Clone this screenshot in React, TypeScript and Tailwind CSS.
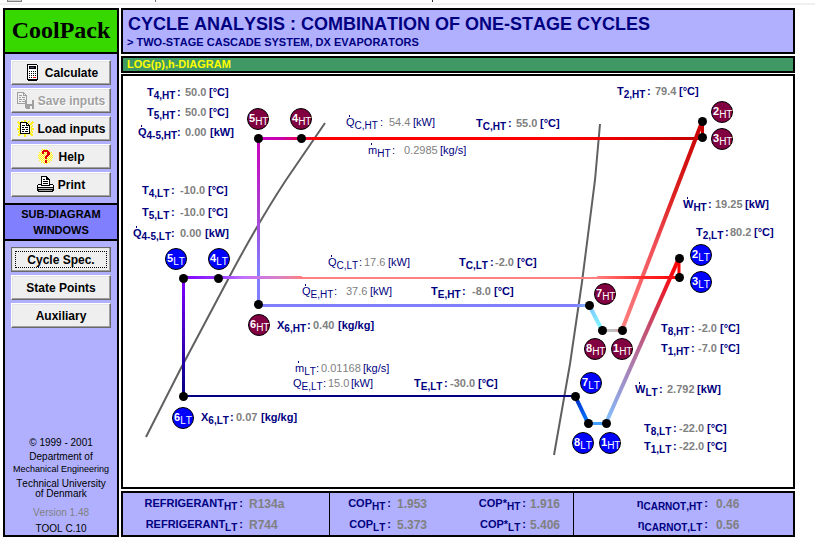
import type { ReactNode } from "react";

type Reading = {
  x: number;
  y: number;
  base: string;
  sub: string;
  colon: number;
  valueX: number;
  value: string;
  unitX: number;
  unit: string;
  dot?: boolean;
  light?: boolean;
};

type Marker = { x: number; y: number; n: string; stage: "HT" | "LT"; low?: boolean };

const readings: Reading[] = [
  { x: 24, y: 20, base: "T", sub: "4,HT", colon: 54, valueX: 62, value: "50.0", unitX: 86, unit: "[°C]" },
  { x: 24, y: 40, base: "T", sub: "5,HT", colon: 54, valueX: 62, value: "50.0", unitX: 86, unit: "[°C]" },
  { x: 15, y: 60, base: "Q", sub: "4-5,HT", colon: 54, valueX: 62, value: "0.00", unitX: 87, unit: "[kW]", dot: true },
  { x: 494, y: 19, base: "T", sub: "2,HT", colon: 524, valueX: 532, value: "79.4", unitX: 556, unit: "[°C]" },
  { x: 223, y: 50, base: "Q", sub: "C,HT", colon: 257, valueX: 266, value: "54.4", unitX: 290, unit: "[kW]", dot: true, light: true },
  { x: 353, y: 51, base: "T", sub: "C,HT", colon: 385, valueX: 393, value: "55.0", unitX: 417, unit: "[°C]" },
  { x: 245, y: 78, base: "m", sub: "HT", colon: 269, valueX: 281, value: "0.2985", unitX: 317, unit: "[kg/s]", dot: true, light: true },
  { x: 19, y: 118, base: "T", sub: "4,LT", colon: 48, valueX: 57, value: "-10.0", unitX: 85, unit: "[°C]" },
  { x: 19, y: 140, base: "T", sub: "5,LT", colon: 48, valueX: 57, value: "-10.0", unitX: 85, unit: "[°C]" },
  { x: 10, y: 161, base: "Q", sub: "4-5,LT", colon: 48, valueX: 57, value: "0.00", unitX: 82, unit: "[kW]", dot: true },
  { x: 560, y: 132, base: "W", sub: "HT", colon: 585, valueX: 592, value: "19.25", unitX: 622, unit: "[kW]", dot: true },
  { x: 573, y: 160, base: "T", sub: "2,LT", colon: 602, valueX: 607, value: "80.2", unitX: 631, unit: "[°C]" },
  { x: 205, y: 190, base: "Q", sub: "C,LT", colon: 236, valueX: 241, value: "17.6", unitX: 265, unit: "[kW]", dot: true, light: true },
  { x: 336, y: 190, base: "T", sub: "C,LT", colon: 367, valueX: 372, value: "-2.0", unitX: 394, unit: "[°C]" },
  { x: 179, y: 219, base: "Q", sub: "E,HT", colon: 211, valueX: 223, value: "37.6", unitX: 247, unit: "[kW]", dot: true, light: true },
  { x: 308, y: 219, base: "T", sub: "E,HT", colon: 339, valueX: 349, value: "-8.0", unitX: 371, unit: "[°C]" },
  { x: 154, y: 253, base: "X", sub: "6,HT", colon: 184, valueX: 190, value: "0.40", unitX: 215, unit: "[kg/kg]" },
  { x: 538, y: 256, base: "T", sub: "8,HT", colon: 568, valueX: 575, value: "-2.0", unitX: 597, unit: "[°C]" },
  { x: 538, y: 276, base: "T", sub: "1,HT", colon: 568, valueX: 575, value: "-7.0", unitX: 597, unit: "[°C]" },
  { x: 172, y: 296, base: "m", sub: "LT", colon: 193, valueX: 198, value: "0.01168", unitX: 240, unit: "[kg/s]", dot: true, light: true },
  { x: 170, y: 311, base: "Q", sub: "E,LT", colon: 200, valueX: 205, value: "15.0", unitX: 228, unit: "[kW]", light: true },
  { x: 291, y: 311, base: "T", sub: "E,LT", colon: 321, valueX: 327, value: "-30.0", unitX: 355, unit: "[°C]" },
  { x: 78, y: 345, base: "X", sub: "6,LT", colon: 107, valueX: 113, value: "0.07", unitX: 138, unit: "[kg/kg]" },
  { x: 512, y: 317, base: "W", sub: "LT", colon: 536, valueX: 544, value: "2.792", unitX: 574, unit: "[kW]", dot: true },
  { x: 521, y: 356, base: "T", sub: "8,LT", colon: 550, valueX: 556, value: "-22.0", unitX: 584, unit: "[°C]" },
  { x: 521, y: 374, base: "T", sub: "1,LT", colon: 550, valueX: 556, value: "-22.0", unitX: 584, unit: "[°C]" },
];

const markers: Marker[] = [
  { x: 135, y: 43, n: "5", stage: "HT" },
  { x: 178, y: 43, n: "4", stage: "HT" },
  { x: 599, y: 36, n: "2", stage: "HT" },
  { x: 599, y: 63, n: "3", stage: "HT" },
  { x: 136, y: 249, n: "6", stage: "HT" },
  { x: 482, y: 218, n: "7", stage: "HT" },
  { x: 472, y: 273, n: "8", stage: "HT" },
  { x: 499, y: 273, n: "1", stage: "HT" },
  { x: 53, y: 183, n: "5", stage: "LT", low: true },
  { x: 96, y: 183, n: "4", stage: "LT", low: true },
  { x: 578, y: 179, n: "2", stage: "LT", low: true },
  { x: 578, y: 206, n: "3", stage: "LT", low: true },
  { x: 60, y: 342, n: "6", stage: "LT", low: true },
  { x: 468, y: 307, n: "7", stage: "LT", low: true },
  { x: 460, y: 367, n: "8", stage: "LT", low: true },
  { x: 487, y: 367, n: "1", stage: "HT", low: true },
];

const nodes = [
  [135, 62], [178, 62], [579, 45], [579, 61], [135, 228], [466, 229], [479, 254], [499, 254],
  [60, 202], [95, 202], [556, 182], [556, 201], [60, 320], [452, 320], [465, 347], [483, 347],
];

function ReadingText({ r }: { r: Reading }) {
  const weight = r.light ? "font-normal" : "font-bold";
  const dotX = r.x + (r.base === "W" ? 4 : 3);
  return (
    <g className={`text-[11px] ${weight}`} fill="#000080">
      {r.dot && <rect x={dotX} y={r.y - 11} width="1" height="2" />}
      <text x={r.x} y={r.y}>
        {r.base}
        <tspan className="text-[10px]" dy="3">{r.sub}</tspan>
      </text>
      <text x={r.colon} y={r.y}>:</text>
      <text x={r.valueX} y={r.y} fill="#808080">{r.value}</text>
      <text x={r.unitX} y={r.y}>{r.unit}</text>
    </g>
  );
}

function Gradient({ id, from, to, stops }: { id: string; from: number[]; to: number[]; stops: [number, string][] }) {
  return (
    <linearGradient id={id} gradientUnits="userSpaceOnUse" x1={from[0]} y1={from[1]} x2={to[0]} y2={to[1]}>
      {stops.map(([offset, color]) => (
        <stop key={offset} offset={offset} stopColor={color} />
      ))}
    </linearGradient>
  );
}

function Diagram() {
  return (
    <svg viewBox="0 0 670 411" className="block h-auto w-full" role="img" aria-label="LOG(p),h-DIAGRAM">
      <defs>
        <Gradient id="htTop" from={[135, 0]} to={[579, 0]} stops={[[0, "#c800c8"], [0.05, "#c800b0"], [0.13, "#ff0000"], [0.7, "#ff0000"], [1, "#c00000"]]} />
        <Gradient id="htLeft" from={[0, 62]} to={[0, 228]} stops={[[0, "#c800b8"], [0.5, "#a848d8"], [0.8, "#8080ff"], [1, "#8080ff"]]} />
        <Gradient id="htBottom" from={[135, 0]} to={[466, 0]} stops={[[0, "#8080ff"], [0.96, "#8080ff"], [1, "#80c0ff"]]} />
        <Gradient id="htSuction" from={[466, 229]} to={[479, 254]} stops={[[0, "#80c0ff"], [1, "#80ffff"]]} />
        <Gradient id="htSuperheat" from={[479, 0]} to={[499, 0]} stops={[[0, "#c0c0c0"], [0.6, "#c0c0c0"], [1, "#ff8080"]]} />
        <Gradient id="htCompression" from={[499, 254]} to={[579, 46]} stops={[[0, "#ff8080"], [0.4, "#f05058"], [0.65, "#dc2020"], [1, "#c80000"]]} />
        <Gradient id="ltTop" from={[60, 0]} to={[179, 0]} stops={[[0, "#8000ff"], [0.3, "#9838ff"], [0.5, "#c070ff"], [0.8, "#d880c8"], [1, "#ff8080"]]} />
        <Gradient id="ltTopEnd" from={[474, 0]} to={[556, 0]} stops={[[0, "#ff8080"], [0.5, "#ff3030"], [1, "#ff0000"]]} />
        <Gradient id="ltLeft" from={[0, 202]} to={[0, 320]} stops={[[0, "#8000ff"], [1, "#000080"]]} />
        <Gradient id="ltSuction" from={[452, 320]} to={[465, 347]} stops={[[0, "#0020b0"], [0.4, "#0048e0"], [1, "#0080ff"]]} />
        <Gradient id="ltCompression" from={[483, 347]} to={[556, 182]} stops={[[0, "#80c0ff"], [0.25, "#a090c8"], [0.6, "#c84868"], [0.85, "#ee1420"], [1, "#ff0000"]]} />
      </defs>

      <g fill="none" stroke="#606060" strokeWidth="2">
        <path d="M202 47 L163 104 Q138 142 110 194 L57 294 L23 361" />
        <path d="M477 48 L472 104 L459 206 L447 288 L431 379" />
      </g>

      <g fill="none" strokeWidth="3">
        <path d="M135 62.5 L579 62.51" stroke="url(#htTop)" />
        <path d="M135.5 62 L135.51 228" stroke="url(#htLeft)" />
        <path d="M135 229.5 L466 229.51" stroke="url(#htBottom)" />
        <path d="M466 229 L479 254" stroke="url(#htSuction)" strokeWidth="4" />
        <path d="M479 254.5 L499 254.51" stroke="url(#htSuperheat)" />
        <path d="M499 254 L579 46" stroke="url(#htCompression)" strokeWidth="4" />
        <path d="M579.5 46 V61" stroke="#c80000" />
        <path d="M60 201.5 L179 201.51" stroke="url(#ltTop)" />
        <path d="M179 202 H474" stroke="#ff8080" strokeWidth="2" />
        <path d="M474 201.5 L556 201.51" stroke="url(#ltTopEnd)" />
        <path d="M556 202 V182" stroke="#ff0000" />
        <path d="M60.5 202 L60.51 320" stroke="url(#ltLeft)" />
        <path d="M60 320 H452" stroke="#000080" strokeWidth="2" />
        <path d="M452 320 L465 347" stroke="url(#ltSuction)" strokeWidth="4" />
        <path d="M465 347.5 H483" stroke="#40a0ff" />
        <path d="M483 347 L556 182" stroke="url(#ltCompression)" strokeWidth="4" />
      </g>

      {nodes.map(([x, y]) => (
        <circle key={`${x}-${y}`} cx={x + 0.5} cy={y + 0.5} r="4.5" />
      ))}

      {markers.map((m) => (
        <g key={`${m.x}-${m.y}`}>
          <circle cx={m.x} cy={m.y} r="10.5" fill={m.low ? "#0000ff" : "#800040"} stroke="#000" />
          <text x={m.x - 9} y={m.y + 3} fill="#fff" className="text-[11px] font-bold">
            {m.n}
            <tspan className="text-[10px] font-normal" dy="3">{m.stage}</tspan>
          </text>
        </g>
      ))}

      {readings.map((r) => (
        <ReadingText key={`${r.x}-${r.y}`} r={r} />
      ))}
    </svg>
  );
}

function Icon({ children }: { children: ReactNode }) {
  return (
    <svg width="17" height="17" viewBox="0 0 17 17" className="shrink-0" shapeRendering="crispEdges" aria-hidden="true">
      {children}
    </svg>
  );
}

function CalculatorIcon() {
  return (
    <Icon>
      <path d="M3 0h10v1h1v15h-1v1H4v-1H3z" fill="#000" />
      <path d="M4 1h9v14H4z" fill="#fff" />
      <path d="M5 2h7v3H5z" fill="#000" />
      <path d="M6 3h4v1H6z" fill="#404080" />
      <path d="M5 7h1v1H5zM7 7h1v1H7zM9 7h1v1H9zM11 7h1v1h-1zM5 9h1v1H5zM7 9h1v1H7zM9 9h1v1H9zM11 9h1v1h-1zM5 11h1v1H5zM7 11h1v1H7zM9 11h1v1H9zM11 11h1v1h-1zM5 13h1v1H5zM7 13h1v1H7z" fill="#000" />
      <path d="M9 13h3v1H9z" fill="#f00" />
    </Icon>
  );
}

function PagePath({ color, paper }: { color: string; paper: string }) {
  return (
    <>
      <path d="M0 0h7v1h1v1h1v1h1v9H0z" fill={color} />
      <path d="M1 1h5v3h3v7H1zM7 2h1v1H7z" fill={paper} />
      <path d="M2 3h3v1H2zM2 5h2v1H2zM5 5h3v1H5zM2 7h3v1H2zM6 7h2v1H6zM2 9h2v1H2zM5 9h3v1H5z" fill={color} />
    </>
  );
}

function SaveIcon() {
  return (
    <Icon>
      <PagePath color="#a0a0a0" paper="#f0f0f0" />
      <path d="M8 8h9v9H9v-1H8z" fill="#a0a0a0" />
      <path d="M10 8h5v4h-5zM11 14h4v3h-4z" fill="#f0f0f0" />
      <path d="M11 14h2v3h-2z" fill="#a0a0a0" />
    </Icon>
  );
}

function LoadIcon() {
  return (
    <Icon>
      <path d="M3 3h11v2h1v8h-1v2H3v-2H2V5h1z" fill="#fff6a0" />
      <path d="M8 0v3M0 9h3M17 9h-3M1 2l3 3M16 2l-3 3M1 16l3-3M16 16l-3-3M5 1l1 2M12 1l-1 2M8 17v-3M1 6l2 1M16 6l-2 1M1 12l2-1M16 12l-2-1" stroke="#ffee20" strokeWidth="2" />
      <g transform="translate(3 2)">
        <PagePath color="#000" paper="#fff" />
      </g>
    </Icon>
  );
}

function HelpIcon() {
  return (
    <Icon>
      <defs>
        <pattern id="halo" width="2" height="2" patternUnits="userSpaceOnUse">
          <path d="M0 0h2v2H0z" fill="#fffbc0" />
          <path d="M0 0h1v1H0zM1 1h1v1H1z" fill="#ffee20" />
        </pattern>
      </defs>
      <path d="M5 1h6v1h2v2h2v2h1v5h-1v2h-2v2h-2v1H6v-1H4v-2H2v-2H1V6h1V4h2V2h1z" fill="url(#halo)" />
      <path d="M6 2h5v1h1v1h1v3h-1v1h-1v1h-1v2H8V8h1V7h1V4H7v2H5V3h1zM8 12h2v3H8z" fill="#e00000" />
    </Icon>
  );
}

function PrintIcon() {
  return (
    <Icon>
      <path d="M4 0h6v1h1v1h1v1h1v5h3v1h1v6h-1v1H1v-1H0V9h1V8h3z" fill="#000" />
      <path d="M5 1h4v3h3v5H5z" fill="#fff" />
      <path d="M6 3h2v1H6zM6 5h5v1H6zM6 7h5v1H6z" fill="#000" />
      <path d="M1 9h3v1h9V9h3v2H1z" fill="#fff" />
      <path d="M1 12h15v1H1z" fill="#c0c0c0" />
      <path d="M2 14h13v1H2z" fill="#a0a0a0" />
    </Icon>
  );
}

const buttonBase =
  "flex h-[25px] w-full items-center justify-center gap-1 border border-t-white border-l-white border-r-[#696969] border-b-[#696969] bg-[#efefef] text-[12px] leading-none font-bold whitespace-nowrap text-black shadow-[inset_-1px_-1px_0_#a0a0a0,inset_1px_1px_0_#e3e3e3]";

function SideButton({ icon, children, disabled }: { icon?: ReactNode; children: ReactNode; disabled?: boolean }) {
  return (
    <button type="button" disabled={disabled} className={`${buttonBase} disabled:text-[#a0a0a0] disabled:text-shadow-[1px_1px_0_#fff]`}>
      {icon}
      {children}
    </button>
  );
}

function Sidebar() {
  return (
    <aside className="flex w-[116px] shrink-0 flex-col border-2 border-black bg-[#b0b0ff]">
      <div className="flex h-11 items-center justify-center border-b-2 border-black bg-[#36d800] pb-0.5 font-['Liberation_Serif',serif] text-2xl font-bold">
        CoolPack
      </div>
      <div className="flex flex-col gap-[3px] px-1.5 pt-1.5 pb-1.5">
        <SideButton icon={<CalculatorIcon />}>Calculate</SideButton>
        <SideButton icon={<SaveIcon />} disabled>Save inputs</SideButton>
        <SideButton icon={<LoadIcon />}>Load inputs</SideButton>
        <SideButton icon={<HelpIcon />}>Help</SideButton>
        <SideButton icon={<PrintIcon />}>Print</SideButton>
      </div>
      <h2 className="border-y-2 border-black bg-[#8080ff] py-px text-center text-[11px] leading-4 font-bold">
        SUB-DIAGRAM
        <br />
        WINDOWS
      </h2>
      <div className="flex flex-col gap-[3px] p-1.5">
        <button type="button" className={`${buttonBase} relative outline-1 -outline-offset-1 outline-[#696969]`}>
          <span className="absolute inset-[3px] border border-dotted border-black" />
          Cycle Spec.
        </button>
        <SideButton>State Points</SideButton>
        <SideButton>Auxiliary</SideButton>
      </div>
      <footer className="mt-auto text-center text-[10px] leading-3 whitespace-nowrap">
        <p>© 1999 - 2001</p>
        <p className="mt-0.5">Department of</p>
        <p className="text-[9px]">Mechanical Engineering</p>
        <p className="mt-1 leading-[10px]">
          Technical University
          <br />
          of Denmark
        </p>
        <p className="mt-2 text-[#808080]">Version 1.48</p>
        <p className="mt-1">TOOL C.10</p>
      </footer>
    </aside>
  );
}

function Result({ name, sub, value, nameClass, valueClass }: { name: string; sub: string; value: string; nameClass: string; valueClass: string }) {
  return (
    <div className="flex h-[21px] items-center">
      <dt className={`text-right whitespace-nowrap ${nameClass}`}>
        {name}
        <sub className="mr-0.5 text-[10px]">{sub}</sub>:
      </dt>
      <dd className={`text-xs text-[#808080] ${valueClass}`}>{value}</dd>
    </div>
  );
}

function Results() {
  return (
    <section className="mt-0.5 grid grid-cols-[206fr_245fr_219fr] border-2 border-black bg-[#b0b0ff] text-[11px] leading-none font-bold text-[#000080]">
      <dl>
        <Result name="REFRIGERANT" sub="HT" value="R134a" nameClass="w-[120px]" valueClass="pl-1.5" />
        <Result name="REFRIGERANT" sub="LT" value="R744" nameClass="w-[120px]" valueClass="pl-1.5" />
      </dl>
      <div className="flex border-x border-black">
        <dl className="w-[135px]">
          <Result name="COP" sub="HT" value="1.953" nameClass="w-[61px]" valueClass="pl-1.5" />
          <Result name="COP" sub="LT" value="5.373" nameClass="w-[61px]" valueClass="pl-1.5" />
        </dl>
        <dl>
          <Result name="COP*" sub="HT" value="1.916" nameClass="w-[61px]" valueClass="pl-1" />
          <Result name="COP*" sub="LT" value="5.406" nameClass="w-[61px]" valueClass="pl-1" />
        </dl>
      </div>
      <dl>
        <Result name="η" sub="CARNOT,HT" value="0.46" nameClass="w-[134px]" valueClass="pl-2" />
        <Result name="η" sub="CARNOT,LT" value="0.56" nameClass="w-[134px]" valueClass="pl-2" />
      </dl>
    </section>
  );
}

export default function App() {
  return (
    <div className="bg-white font-['Liberation_Sans',Arial,sans-serif] text-black [font-kerning:none]">
      <svg className="block h-[3px] w-full" shapeRendering="crispEdges" aria-hidden="true">
        <path d="M7 0h15v2H7z" fill="#808080" />
        <path d="M8 0h13v1H8z" fill="#d0d0d0" />
        <path d="M155 0h1v2h-1z" fill="#707070" />
        <path d="M432 0h1v2h-1z" fill="#303030" />
      </svg>
      <div className="h-0.5 bg-[#f0f0f0]" />
      <div className="flex gap-0.5 pt-[3px] pr-5 pl-[3px]">
        <Sidebar />
        <main className="min-w-0 flex-1">
          <header className="h-[46px] border-2 border-black bg-[#b0b0ff] px-1 pt-0.5 font-bold text-[#000080]">
            <h1 className="pl-px text-lg leading-6">CYCLE ANALYSIS : COMBINATION OF ONE-STAGE CYCLES</h1>
            <p className="text-[11px] leading-[13px]">&gt; TWO-STAGE CASCADE SYSTEM, DX EVAPORATORS</p>
          </header>
          <h2 className="mt-0.5 h-[17px] border-2 border-black bg-[#409864] px-1 text-[11px] leading-[13px] font-bold text-[#ffff00]">
            LOG(p),h-DIAGRAM
          </h2>
          <section className="mt-px border-2 border-black bg-white">
            <Diagram />
          </section>
          <Results />
        </main>
      </div>
    </div>
  );
}
